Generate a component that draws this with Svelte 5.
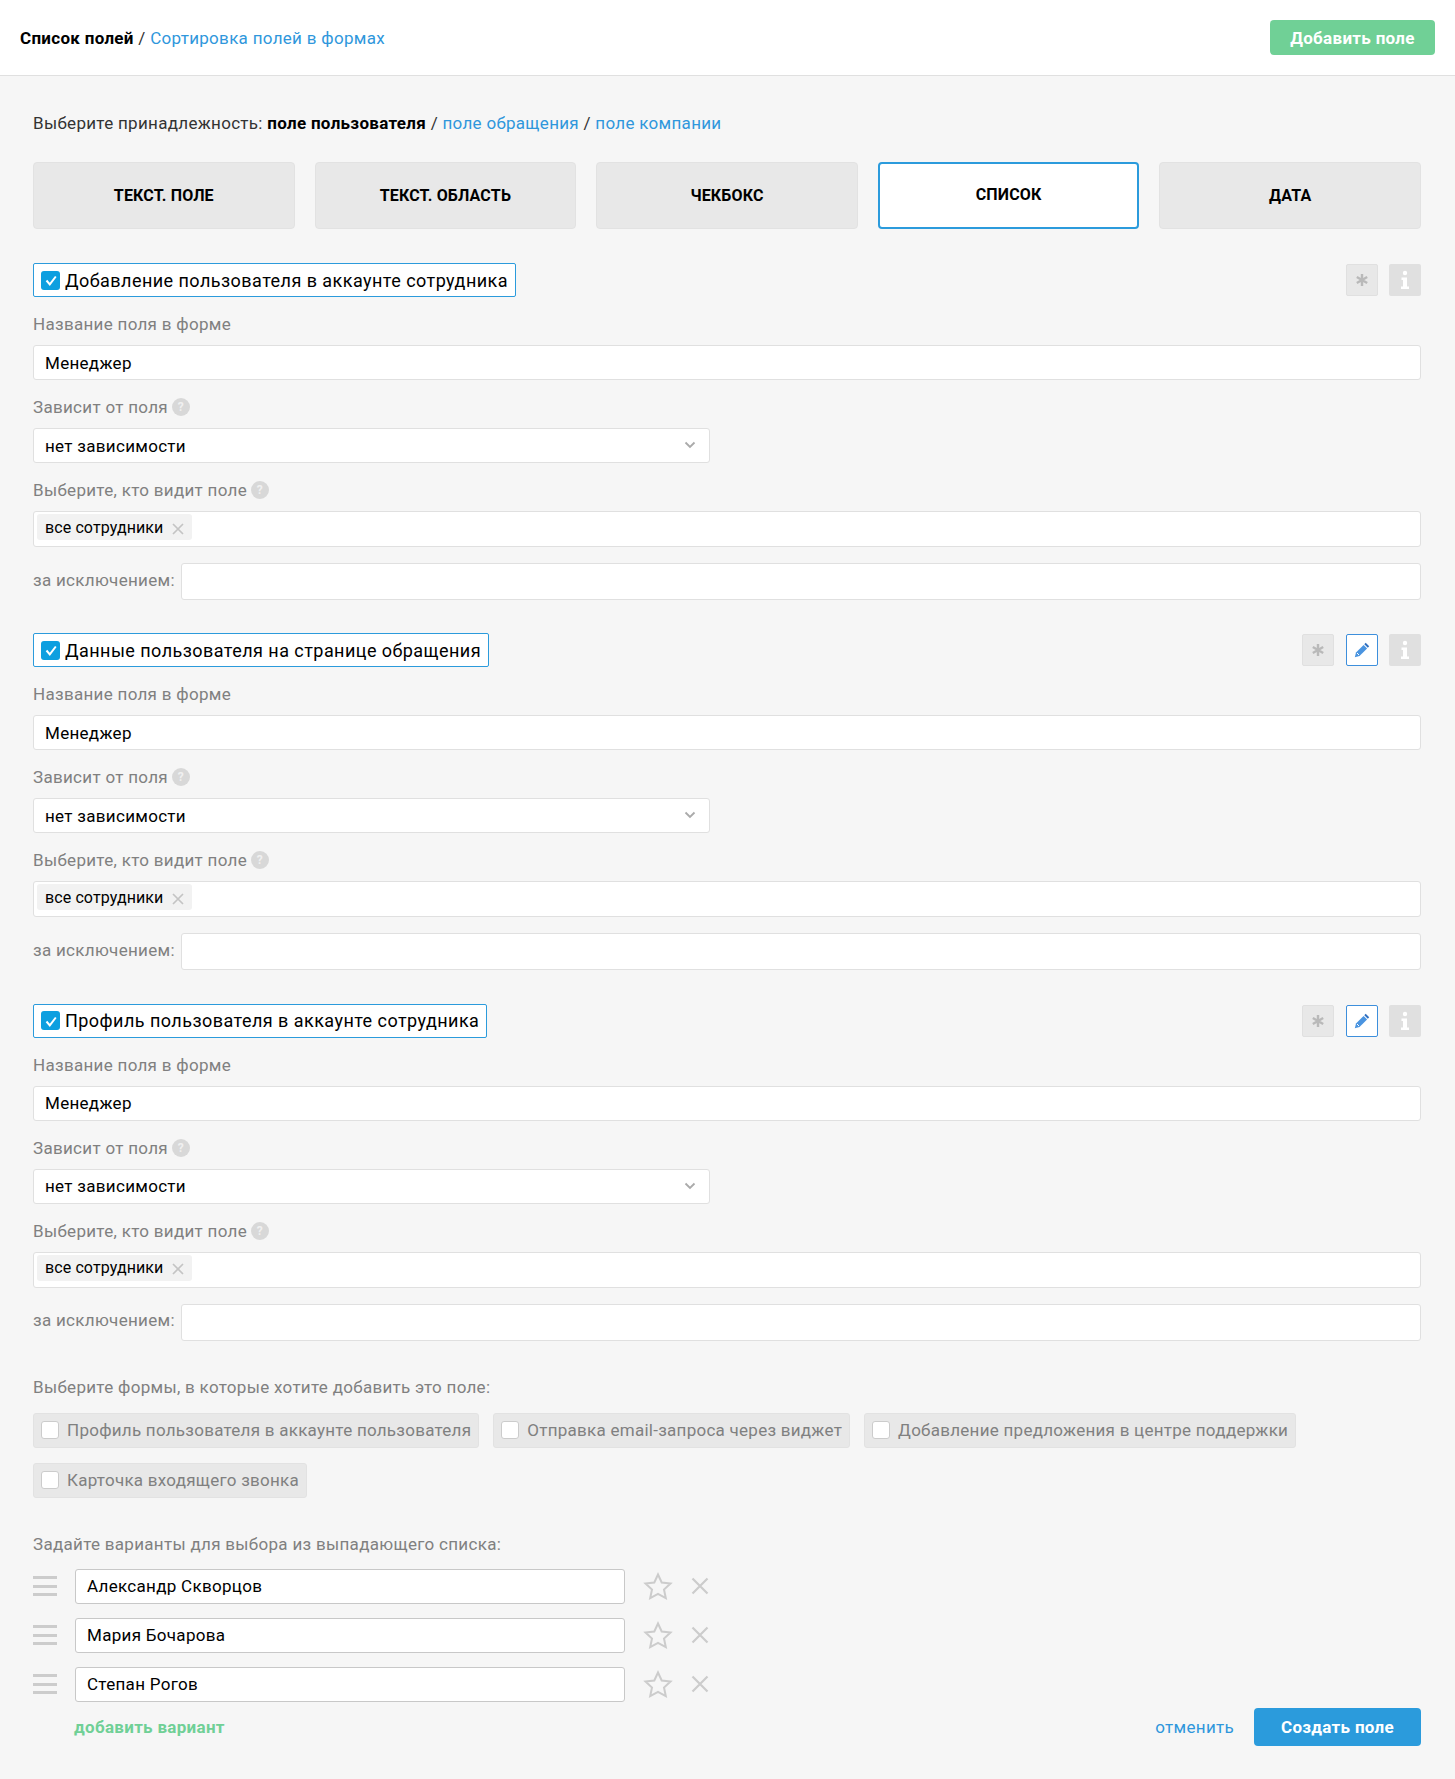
<script>
  const tabs = [
    { name: 'Текст. поле' },
    { name: 'Текст. область' },
    { name: 'Чекбокс' },
    { name: 'Список', active: true },
    { name: 'Дата' }
  ];

  const sections = [
    { title: 'Добавление пользователя в аккаунте сотрудника', edit: false },
    { title: 'Данные пользователя на странице обращения', edit: true },
    { title: 'Профиль пользователя в аккаунте сотрудника', edit: true }
  ];

  const forms = [
    'Профиль пользователя в аккаунте пользователя',
    'Отправка email-запроса через виджет',
    'Добавление предложения в центре поддержки',
    'Карточка входящего звонка'
  ];

  const options = ['Александр Скворцов', 'Мария Бочарова', 'Степан Рогов'];
</script>

<div class="page">
  <header class="topbar">
    <div class="crumbs"><b>Список полей</b> / <a href="#sort">Сортировка полей в формах</a></div>
    <button class="btn-add">Добавить поле</button>
  </header>

  <main class="content">
    <div class="belong">
      Выберите принадлежность: <b>поле пользователя</b> / <a href="#a">поле обращения</a> / <a href="#b">поле компании</a>
    </div>

    <div class="tabs">
      {#each tabs as tab}
        <div class="tab" class:active={tab.active}>{tab.name}</div>
      {/each}
    </div>

    {#each sections as section}
      <section class="section">
        <div class="section-head">
          <div class="check-label">
            <span class="check">
              <svg width="12" height="12" viewBox="0 0 12 12"><path d="M1.500 6.500 4.800 10.300 10.800 2.500" fill="none" stroke="#fff" stroke-width="2"/></svg>
            </span>
            {section.title}
          </div>
          <div class="tools">
            <span class="tool tool-star">
              <svg width="14" height="14" viewBox="0 0 14 14"><path d="M7 1v12M1.800 4 12.200 10M12.200 4 1.800 10" stroke="#b9b9b9" stroke-width="2.400"/></svg>
            </span>
            {#if section.edit}
              <span class="tool tool-edit">
                <svg width="16" height="16" viewBox="0 0 16 16"><path d="M11.700 .8 15.200 4.300 13.800 5.700 10.300 2.200Z" fill="#2f6fc0"/><path d="M9.600 2.900 13.100 6.400 5.500 14 .8 15.200 2 10.500Z" fill="#4a94e0"/><path d="M3 11 5 13" stroke="#fff" stroke-width="1"/></svg>
              </span>
            {/if}
            <span class="tool tool-info">
              <svg width="12" height="20" viewBox="0 0 12 20"><circle cx="6" cy="3" r="2.200" fill="#fff"/><path d="M2.500 7.500h5.500v9h2v2.500H2v-2.500h2V10H2.500Z" fill="#fff"/></svg>
            </span>
          </div>
        </div>

        <div class="label first">Название поля в форме</div>
        <div class="input">Менеджер</div>

        <div class="label">Зависит от поля <span class="hint">?</span></div>
        <div class="input select">
          нет зависимости
          <svg class="chevron" width="12" height="8" viewBox="0 0 12 8"><path d="M1.500 1.500 6 6l4.500-4.500" fill="none" stroke="#aaa" stroke-width="1.800"/></svg>
        </div>

        <div class="label">Выберите, кто видит поле <span class="hint">?</span></div>
        <div class="input multi">
          <span class="chip">
            все сотрудники
            <svg width="12" height="12" viewBox="0 0 12 12"><path d="M1 1l10 10M11 1 1 11" stroke="#c4c4c4" stroke-width="1.700"/></svg>
          </span>
        </div>

        <div class="except">
          <span class="except-label">за исключением:</span>
          <div class="input except-input"></div>
        </div>
      </section>
    {/each}

    <div class="label forms-label">Выберите формы, в которые хотите добавить это поле:</div>
    <div class="forms">
      {#each forms as form}
        <div class="form-item"><span class="box"></span>{form}</div>
      {/each}
    </div>

    <div class="label options-label">Задайте варианты для выбора из выпадающего списка:</div>
    {#each options as option}
      <div class="option">
        <span class="drag"><i></i><i></i><i></i></span>
        <div class="input option-input">{option}</div>
        <svg class="star" width="30" height="28" viewBox="0 0 30 28"><path d="M15 2.500l3.700 8 8.800 1-6.500 6 1.800 8.600L15 21.800l-7.800 4.300L9 17.500l-6.500-6 8.800-1Z" fill="none" stroke="#ccc" stroke-width="2"/></svg>
        <svg class="remove" width="18" height="18" viewBox="0 0 18 18"><path d="M1.500 1.500l15 15M16.500 1.500l-15 15" stroke="#ccc" stroke-width="2.200"/></svg>
      </div>
    {/each}

    <div class="footer">
      <a class="add-option" href="#add">добавить вариант</a>
      <div class="actions">
        <a class="cancel" href="#cancel">отменить</a>
        <button class="btn-create">Создать поле</button>
      </div>
    </div>
  </main>
</div>

<style>
  :global(body) {
    margin: 0;
    background: #f6f6f6;
    font-family: Roboto, "Liberation Sans", sans-serif;
    font-size: 17px;
    letter-spacing: 0.3px;
    color: #000;
  }

  a {
    color: #2f97dc;
    text-decoration: none;
  }

  .topbar {
    display: flex;
    justify-content: space-between;
    align-items: center;
    height: 75px;
    padding: 0 20px;
    background: #fff;
    border-bottom: 1px solid #e0e0e0;
  }

  .crumbs {
    color: #333;
  }

  .crumbs b {
    color: #000;
  }

  button {
    border: none;
    color: #fff;
    font-family: inherit;
    font-size: 17px;
    font-weight: 700;
    letter-spacing: 0.3px;
    border-radius: 4px;
  }

  .btn-add {
    width: 165px;
    height: 35px;
    padding: 0;
    background: #70d096;
  }

  .content {
    padding: 35px 34px 34px 33px;
  }

  .belong {
    line-height: 24px;
    height: 24px;
    color: #333;
  }

  .belong b {
    color: #000;
  }

  .tabs {
    display: grid;
    grid-template-columns: repeat(5, 1fr);
    gap: 20px;
    margin-top: 27px;
    margin-bottom: 34px;
  }

  .tab {
    display: flex;
    align-items: center;
    justify-content: center;
    height: 67px;
    box-sizing: border-box;
    background: #e8e8e8;
    border: 1px solid #e2e2e2;
    border-radius: 4px;
    font-size: 16px;
    font-weight: 700;
    letter-spacing: 0.15px;
    text-transform: uppercase;
  }

  .tab.active {
    background: #fff;
    border: 2px solid #2b9bdc;
    padding-bottom: 2px;
  }

  .section {
    margin-bottom: 33.400px;
  }

  .section-head {
    display: flex;
    justify-content: space-between;
    align-items: center;
    height: 34px;
  }

  .check-label {
    display: flex;
    align-items: center;
    gap: 5px;
    height: 34px;
    box-sizing: border-box;
    padding: 0 7px;
    background: #fff;
    border: 1px solid #2b9bdc;
    border-radius: 2px;
    font-size: 18px;
    letter-spacing: 0.45px;
  }

  .check {
    display: flex;
    align-items: center;
    justify-content: center;
    width: 19px;
    height: 19px;
    background: #0d9fe0;
    border-radius: 3px;
  }

  .tools {
    display: flex;
    gap: 11px;
  }

  .tool {
    display: flex;
    align-items: center;
    justify-content: center;
    width: 32px;
    height: 32px;
    box-sizing: border-box;
    border-radius: 2px;
  }

  .tool-star {
    background: #e8e8e8;
    border: 1px solid #e0e0e0;
  }

  .tool-edit {
    margin-left: 1px;
    background: #fff;
    border: 1px solid #3d8fdc;
  }

  .tool-info {
    background: #e0e0e0;
  }

  .label {
    display: flex;
    align-items: center;
    gap: 4px;
    height: 20px;
    margin: 17px 0 11px;
    color: #808080;
    line-height: 20px;
  }

  .hint {
    display: inline-flex;
    align-items: center;
    justify-content: center;
    width: 18px;
    height: 18px;
    border-radius: 50%;
    background: #d8d8d8;
    color: #f0f0f0;
    font-size: 12px;
    font-weight: 700;
  }

  .input {
    display: flex;
    align-items: center;
    height: 35px;
    box-sizing: border-box;
    padding: 0 11px;
    background: #fff;
    border: 1px solid #e0e0e0;
    border-radius: 3px;
  }

  .select {
    justify-content: space-between;
    width: 677px;
    padding-right: 13px;
  }

  .chevron {
    margin-top: -1px;
  }

  .multi {
    align-items: flex-start;
    height: 36px;
    padding: 2px 3px 0;
  }

  .chip {
    display: flex;
    align-items: center;
    gap: 9px;
    height: 26px;
    padding: 0 8px;
    background: #f2f2f2;
    border-radius: 3px;
    font-size: 16px;
    letter-spacing: 0.1px;
  }

  .chip svg {
    margin-top: 3px;
  }

  .except {
    display: flex;
    align-items: center;
    gap: 6px;
    margin-top: 16px;
  }

  .except-label {
    margin-bottom: 4px;
    color: #808080;
  }

  .except-input {
    flex: 1;
    height: 37px;
  }

  .forms-label {
    margin-top: 36.200px;
    margin-bottom: 16px;
  }

  .forms {
    display: flex;
    flex-wrap: wrap;
    gap: 15px 14px;
    letter-spacing: 0.26px;
  }

  .form-item {
    display: flex;
    align-items: center;
    gap: 8px;
    height: 35px;
    box-sizing: border-box;
    padding: 0 7px;
    background: #e8e8e8;
    border: 1px solid #e2e2e2;
    border-radius: 3px;
    color: #808080;
  }

  .box {
    width: 18px;
    height: 18px;
    box-sizing: border-box;
    background: #fff;
    border: 1px solid #ccc;
    border-radius: 3px;
  }

  .options-label {
    margin-top: 36px;
    margin-bottom: 15px;
  }

  .option {
    display: flex;
    align-items: center;
    height: 35px;
    margin-bottom: 14px;
  }

  .drag {
    display: flex;
    flex-direction: column;
    gap: 5.500px;
    width: 24px;
    margin-right: 18px;
  }

  .drag i {
    display: block;
    height: 3px;
    background: #ccc;
  }

  .option-input {
    width: 550px;
    border-color: #c8c8c8;
  }

  .star {
    margin-left: 18px;
  }

  .remove {
    margin-left: 18px;
  }

  .footer {
    display: flex;
    justify-content: space-between;
    align-items: center;
    margin-top: -8px;
    padding-left: 41px;
  }

  .add-option {
    color: #70d096;
    font-weight: 700;
  }

  .actions {
    display: flex;
    align-items: center;
    gap: 20px;
  }

  .btn-create {
    width: 167px;
    height: 38px;
    background: #2b9bdc;
  }
</style>
